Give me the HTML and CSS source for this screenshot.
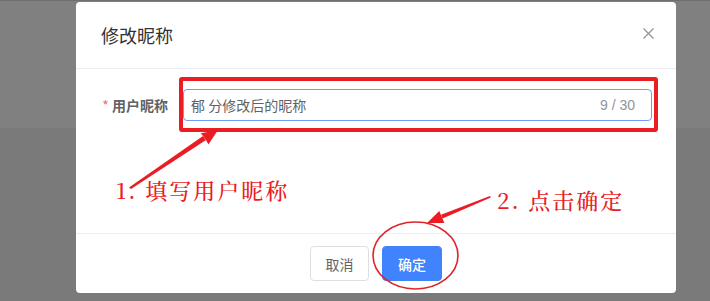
FILE: index.html
```html
<!DOCTYPE html>
<html lang="zh">
<head>
<meta charset="utf-8">
<title>修改昵称</title>
<link rel="stylesheet" href="styles.css">
</head>
<body>
<div class="dialog">
  <div class="dialog-header">
    <span class="dialog-title">修改昵称</span>
    <svg class="close" width="11" height="11" viewBox="0 0 11 11"><path d="M0.5 0.5L10.5 10.5M10.5 0.5L0.5 10.5" stroke="#909399" stroke-width="1.2" fill="none"/></svg>
  </div>
  <div class="dialog-body">
    <div class="form-row">
      <label class="form-label"><span class="req">*</span> 用户昵称</label>
      <div class="input">
        <span class="input-text">郁 分修改后的昵称</span>
        <span class="count">9 / 30</span>
      </div>
    </div>
  </div>
  <div class="dialog-footer">
    <button class="btn">取消</button>
    <button class="btn btn-primary">确定</button>
  </div>
</div>

<div class="mark-rect"></div>
<div class="note note-1">1. 填写用户昵称</div>
<div class="note note-2">2. 点击确定</div>
<svg class="overlay" width="710" height="301" viewBox="0 0 710 301">
  <polygon points="129,187.5 131,189 206,140 203,136" fill="#ea1c24"/>
  <polygon points="218,130 208.4,144.4 205.5,139 200.8,133.2" fill="#ea1c24"/>
  <polygon points="490,196 490.8,197.6 442.5,218.5 441,214.8" fill="#ea1c24"/>
  <polygon points="427,223 444.4,223 441.8,216.9 439.3,210.9" fill="#ea1c24"/>
  <ellipse cx="415.5" cy="255.5" rx="42.5" ry="33.5" fill="none" stroke="#e0222b" stroke-width="1.6"/>
</svg>
</body>
</html>
```

FILE: styles.css
```css
html, body {
  margin: 0;
  padding: 0;
}
body {
  width: 710px;
  height: 301px;
  overflow: hidden;
  position: relative;
  background: linear-gradient(#6e6e6e 0, #6e6e6e 1px, #808080 1px, #808080 128px, #7a7a7a 128px);
  font-family: "Noto Sans CJK SC", "Liberation Sans", sans-serif;
}
.dialog {
  margin: 2px 0 0 76px;
  width: 600px;
  height: 291px;
  background: #fff;
  border-radius: 4px;
  display: flex;
  flex-direction: column;
}
.dialog-header {
  height: 66px;
  border-bottom: 1px solid #ebeef5;
  display: flex;
  align-items: center;
  justify-content: space-between;
  padding: 0 22px 0 25px;
}
.dialog-title {
  font-size: 18px;
  color: #303133;
  line-height: 24px;
}
.close {
  display: block;
  margin-top: -3px;
}
.dialog-body {
  height: 164px;
  padding: 20px 24px 0 20px;
  box-sizing: border-box;
}
.form-row {
  display: flex;
  align-items: center;
  height: 32px;
}
.form-label {
  width: 87px;
  box-sizing: border-box;
  padding-right: 15px;
  text-align: right;
  font-size: 14px;
  font-weight: bold;
  color: #606266;
  white-space: nowrap;
}
.req {
  color: #f56c6c;
  font-weight: normal;
}
.input {
  flex: 1;
  height: 32px;
  box-sizing: border-box;
  border: 1px solid #6a9cf8;
  border-radius: 4px;
  display: flex;
  align-items: center;
  justify-content: space-between;
  padding: 0 16px 0 7px;
  font-size: 14px;
}
.input-text {
  color: #606266;
}
.count {
  color: #909399;
  font-family: "Liberation Sans", sans-serif;
  font-size: 14px;
}
.dialog-footer {
  border-top: 1px solid #ebeef5;
  display: flex;
  justify-content: center;
  gap: 13px;
  padding-top: 12px;
}
.btn {
  height: 35px;
  width: 59px;
  box-sizing: border-box;
  border: 1px solid #dcdfe6;
  border-radius: 4px;
  background: #fff;
  color: #606266;
  font-family: "Noto Sans CJK SC", sans-serif;
  font-size: 14px;
  padding: 0;
}
.btn-primary {
  width: 60px;
  background: #4083fc;
  border-color: #4083fc;
  color: #fff;
  font-weight: 500;
}
.mark-rect {
  position: absolute;
  left: 179px;
  top: 77px;
  width: 479px;
  height: 55px;
  box-sizing: border-box;
  border: 4px solid #ea1c24;
  border-radius: 3px;
}
.note {
  position: absolute;
  color: #ea1c24;
  font-family: "Noto Serif CJK SC", "Liberation Serif", "Noto Sans CJK SC", serif;
  font-size: 22px;
  font-weight: 500;
  line-height: 26px;
  letter-spacing: 2px;
  white-space: nowrap;
}
.note-1 {
  left: 116px;
  top: 177px;
}
.note-2 {
  left: 497px;
  top: 187px;
}
.overlay {
  position: absolute;
  left: 0;
  top: 0;
}
```
